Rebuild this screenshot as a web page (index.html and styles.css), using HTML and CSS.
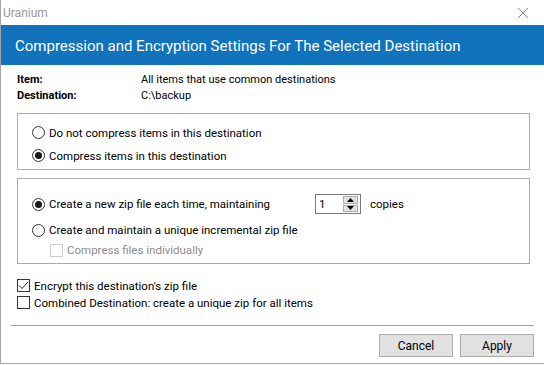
FILE: index.html
```html
<!DOCTYPE html>
<html lang="en">
<head>
    <meta charset="UTF-8">
    <title>Uranium</title>
    <link rel="stylesheet" href="styles.css">
</head>
<body>
<div class="window">
    <div class="titlebar">
        <span class="app-name">Uranium</span>
        <svg class="close" width="12" height="12" viewBox="0 0 12 12">
            <path d="M1 1 L11 11 M11 1 L1 11" stroke="#8a8a8a" stroke-width="1" fill="none"/>
        </svg>
    </div>

    <div class="banner">Compression and Encryption Settings For The Selected Destination</div>

    <div class="info">
        <span class="label">Item:</span><span>All items that use common destinations</span>
        <span class="label">Destination:</span><span>C:\backup</span>
    </div>

    <div class="group group-compress">
        <div class="option"><span class="radio"></span>Do not compress items in this destination</div>
        <div class="option"><span class="radio checked"></span>Compress items in this destination</div>
    </div>

    <div class="group group-zip">
        <div class="option option-spin">
            <span class="radio checked"></span>
            <span class="spin-label">Create a new zip file each time, maintaining</span>
            <div class="spinner">
                <span class="spin-value">1</span>
                <div class="spin-buttons">
                    <span class="spin-btn"><svg width="7" height="4" viewBox="0 0 7 4"><path d="M0 4 L3.5 0 L7 4 Z" fill="#000"/></svg></span>
                    <span class="spin-btn"><svg width="7" height="4" viewBox="0 0 7 4"><path d="M0 0 L3.5 4 L7 0 Z" fill="#000"/></svg></span>
                </div>
            </div>
            <span class="copies">copies</span>
        </div>
        <div class="option"><span class="radio"></span>Create and maintain a unique incremental zip file</div>
        <div class="option sub disabled"><span class="check"></span>Compress files individually</div>
    </div>

    <div class="checks">
        <div class="option"><span class="check checked"><svg width="11" height="9" viewBox="0 0 11 9"><path d="M1 4.5 L4 7.5 L10 1" stroke="#333" stroke-width="1" fill="none"/></svg></span>Encrypt this destination's zip file</div>
        <div class="option"><span class="check"></span>Combined Destination: create a unique zip for all items</div>
    </div>

    <div class="footer">
        <button type="button">Cancel</button>
        <button type="button">Apply</button>
    </div>
</div>
</body>
</html>
```

FILE: styles.css
```css
* {
    box-sizing: border-box;
    margin: 0;
    padding: 0;
}
body {
    font-family: Roboto, "Noto Sans", sans-serif;
    font-size: 11.5px;
    color: #000;
    background-color: #fff;
    width: 544px;
    height: 365px;
    overflow: hidden;
}
.window {
    height: 364px;
    border-left: 1px solid #a5a5a5;
    border-bottom: 1px solid #a5a5a5;
}
.titlebar {
    height: 25px;
    display: flex;
    align-items: center;
    justify-content: space-between;
    padding: 0 15px 0 2px;
}
.app-name {
    color: #999;
    font-size: 12px;
}
.banner {
    height: 40px;
    background-color: #1273bd;
    color: #fff;
    font-size: 15px;
    letter-spacing: 0;
    padding-left: 14px;
    line-height: 42px;
    white-space: nowrap;
}
.info {
    display: grid;
    grid-template-columns: 124px auto;
    grid-auto-rows: 16px;
    line-height: 16px;
    padding: 7px 16px 0 16px;
    height: 48px;
    font-size: 11px;
}
.label {
    font-weight: bold;
}
.group {
    margin: 0 14px 0 16px;
    border: 1px solid #acacac;
}
.group-compress {
    height: 57px;
    padding: 7px 0 0 14px;
}
.group-zip {
    margin-top: 8px;
    height: 86px;
    padding: 12px 0 0 14px;
}
.option {
    display: flex;
    align-items: center;
    height: 23px;
    white-space: nowrap;
}
.group-zip .option {
    height: 26px;
}
.group-zip .option.sub {
    height: 14px;
    padding-left: 18px;
}
.radio {
    width: 13px;
    height: 13px;
    border: 1px solid #333;
    border-radius: 50%;
    margin-right: 4px;
    display: flex;
    align-items: center;
    justify-content: center;
    flex-shrink: 0;
}
.radio.checked::after {
    content: "";
    width: 7px;
    height: 7px;
    border-radius: 50%;
    background-color: #1a1a1a;
}
.check {
    width: 13px;
    height: 13px;
    border: 1px solid #333;
    background-color: #fff;
    margin-right: 4px;
    display: flex;
    align-items: center;
    justify-content: center;
    flex-shrink: 0;
}
.disabled {
    color: #8d8d8d;
}
.disabled .check {
    border-color: #cccccc;
}
.spin-label {
    width: 266px;
}
.spinner {
    width: 46px;
    height: 20px;
    border: 1px solid #7a7a7a;
    display: flex;
    justify-content: space-between;
    padding: 1px 2px 1px 3px;
}
.spin-value {
    line-height: 16px;
}
.spin-buttons {
    display: flex;
    flex-direction: column;
    gap: 1px;
}
.spin-btn {
    width: 15px;
    height: 8px;
    background-color: #e1e1e1;
    border: 1px solid #adadad;
    display: flex;
    align-items: center;
    justify-content: center;
}
.copies {
    margin-left: 9px;
}
.checks {
    padding: 13px 0 0 16px;
    height: 61px;
}
.checks .option {
    height: 17px;
}
.footer {
    margin: 0 10px 0 10px;
    border-top: 1px solid #a0a0a0;
    display: flex;
    justify-content: flex-end;
    gap: 7px;
    padding: 8px 0 0 0;
}
button {
    font-family: Roboto, "Noto Sans", sans-serif;
    font-size: 12px;
    width: 74px;
    height: 23px;
    background-color: #e1e1e1;
    border: 1px solid #adadad;
    color: #000;
}
```
